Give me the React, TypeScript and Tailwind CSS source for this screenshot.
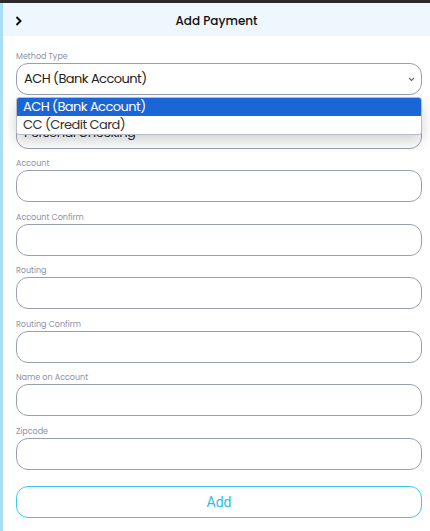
import React from 'react';

const font = "font-['Poppins','Open_Sans',sans-serif]";

const fields = [
  { label: 'Account Type', value: 'Personal Checking', select: true },
  { label: 'Account' },
  { label: 'Account Confirm' },
  { label: 'Routing' },
  { label: 'Routing Confirm' },
  { label: 'Name on Account' },
  { label: 'Zipcode' },
];

function ChevronDown() {
  return (
    <svg width="7" height="5" viewBox="0 0 7 5" className="shrink-0">
      <polyline points="1,1 3.5,3.5 6,1" fill="none" stroke="#666" strokeWidth="1.1" />
    </svg>
  );
}

function Field({ label, value, select }: { label: string; value?: string; select?: boolean }) {
  return (
    <div className="mb-[8.5px]">
      <div className={`h-[13px] text-[8px] leading-[13px] text-[#8b93a5] ${font}`}>{label}</div>
      <div className="h-[32px] rounded-xl border-[1.5px] border-[#979fb0] bg-white flex items-center justify-between pl-[7px] pr-[6px]">
        {value && <span className={`text-[13px] tracking-[-0.55px] text-[#222] ${font}`}>{value}</span>}
        {select && <ChevronDown />}
      </div>
    </div>
  );
}

export default function App() {
  return (
    <div className="w-[430px] h-[531px] bg-white overflow-hidden flex flex-col">
      <div className="h-[3px] bg-[#2b2b2b] shrink-0" />
      <div className="flex flex-1">
        <div className="w-[3px] bg-[#a8dff6] shrink-0" />
        <div className="flex-1 flex flex-col relative">
          {/* Header */}
          <div className="h-[33px] bg-[#eef6fe] flex items-center relative pt-[3px]">
            <svg width="7" height="10" viewBox="0 0 7 10" className="absolute left-[12px] top-[13px]">
              <polyline points="1.5,1 5.5,5 1.5,9" fill="none" stroke="#111" strokeWidth="2" />
            </svg>
            <div className={`flex-1 text-center text-[12px] font-medium text-[#111] ${font}`}>Add Payment</div>
          </div>

          {/* Form */}
          <div className="pt-[14px] pl-[13px] pr-[8px] flex flex-col">
            <div className="mb-[8.5px]">
              <div className={`h-[13px] text-[8px] leading-[13px] text-[#8b93a5] ${font}`}>Method Type</div>
              <div className="h-[32px] rounded-xl border-[1.5px] border-[#979fb0] bg-white flex items-center justify-between pl-[7px] pr-[6px]">
                <span className={`text-[13px] tracking-[-0.55px] text-[#222] ${font}`}>ACH (Bank Account)</span>
                <ChevronDown />
              </div>
            </div>
            {fields.map((f) => (
              <Field key={f.label} label={f.label} value={f.value} select={f.select} />
            ))}
            <button className="mt-[8px] h-[32px] rounded-xl border-[1.5px] border-[#3ac8f0] text-[#2dbde9] text-[14px] font-['Roboto',sans-serif]">
              Add
            </button>
          </div>

          {/* Open dropdown */}
          <div className="absolute left-[13px] right-[8px] top-[94px] bg-white border border-[#b8bcc4] rounded-[3px] shadow-[0_6px_14px_rgba(0,0,0,0.18)] overflow-hidden">
            <div className={`h-[18px] bg-[#1a66d6] text-white text-[13px] tracking-[-0.55px] leading-[18px] pl-[6px] ${font}`}>ACH (Bank Account)</div>
            <div className={`h-[18px] text-[#333] text-[13px] tracking-[-0.55px] leading-[18px] pl-[6px] ${font}`}>CC (Credit Card)</div>
          </div>
        </div>
      </div>
    </div>
  );
}
